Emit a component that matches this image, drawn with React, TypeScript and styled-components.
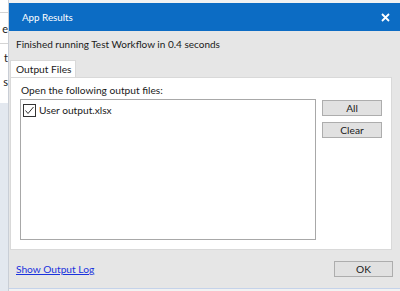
import React from 'react';
import styled, { createGlobalStyle } from 'styled-components';

const GlobalStyle = createGlobalStyle`
  body {
    margin: 0;
    background: #f2f2f2;
    font-family: 'Segoe UI', Lato, 'Liberation Sans', sans-serif;
    font-size: 10.2px;
    color: #1a1a1a;
  }
`;

const Screen = styled.div`
  display: flex;
  width: 400px;
  height: 291px;
  overflow: hidden;
`;

const BackWindow = styled.div`
  width: 9px;
  flex-shrink: 0;
  display: flex;
  flex-direction: column;
  background: #ffffff;
  border-right: 1px solid #c9ced6;
  box-sizing: border-box;
  overflow: hidden;
`;

const BackRow = styled.div<{ $h: number; $line?: boolean }>`
  height: ${({ $h }) => $h}px;
  flex-shrink: 0;
  display: flex;
  align-items: center;
  justify-content: flex-end;
  border-bottom: ${({ $line }) => ($line ? '1px solid #d4d4d4' : 'none')};
  font-size: 11px;
  color: #222;
  white-space: nowrap;
`;

const BackFill = styled.div`
  flex: 1;
  background: #e3e8ef;
`;

const Dialog = styled.div`
  flex: 1;
  margin-top: 3px;
  height: 285px;
  display: flex;
  flex-direction: column;
  background: #e6e6e6;
  border-bottom: 1px solid #c5d3ea;
`;

const TitleBar = styled.div`
  height: 28px;
  flex-shrink: 0;
  display: flex;
  align-items: center;
  justify-content: space-between;
  padding: 0 11px 0 13px;
  background: #0c6cc4;
  color: #ffffff;
  font-size: 9.8px;
`;

const CloseGlyph = styled.svg`
  width: 9px;
  height: 9px;
`;

const Status = styled.div`
  height: 26px;
  display: flex;
  align-items: center;
  padding-left: 7px;
  font-size: 10px;
`;

const TabStrip = styled.div`
  display: flex;
  padding-left: 1px;
  margin-top: 3px;
`;

const Tab = styled.div`
  height: 17px;
  padding: 0 4px 0 5px;
  display: flex;
  align-items: center;
  background: #ffffff;
  border: 1px solid #d9d9d9;
  border-bottom: none;
  box-sizing: border-box;
`;

const Panel = styled.div`
  margin: 0 9px 0 1px;
  height: 173px;
  box-sizing: border-box;
  background: #ffffff;
  border: 1px solid #d9d9d9;
  padding: 4px 9px 9px 9px;
  display: flex;
  flex-direction: column;
`;

const Label = styled.div`
  height: 16px;
  display: flex;
  align-items: center;
  padding-left: 1px;
  margin-bottom: 1px;
`;

const PanelBody = styled.div`
  flex: 1;
  display: flex;
  gap: 6px;
`;

const FileList = styled.div`
  width: 296px;
  box-sizing: border-box;
  border: 1px solid #a8a8a8;
  padding: 3px 2px;
`;

const FileItem = styled.label`
  display: flex;
  align-items: center;
  gap: 3px;
  height: 14px;
`;

const Check = styled.svg`
  width: 13px;
  height: 13px;
`;

const ButtonColumn = styled.div`
  display: flex;
  flex-direction: column;
  gap: 6px;
  padding-top: 1px;
`;

const Button = styled.button<{ $w: number }>`
  width: ${({ $w }) => $w}px;
  height: 16px;
  padding: 0;
  font: inherit;
  line-height: 14px;
  color: #1a1a1a;
  background: #e1e1e1;
  border: 1px solid #adadad;
`;

const Footer = styled.div`
  flex: 1;
  display: flex;
  align-items: center;
  justify-content: space-between;
  padding: 0 8px 0 7px;
`;

const LogLink = styled.a`
  color: #1a33dd;
  text-decoration: underline;
  cursor: pointer;
`;

const App: React.FC = () => {
  return (
    <>
      <GlobalStyle />
      <Screen>
        <BackWindow>
          <BackRow $h={12} $line />
          <BackRow $h={30} $line>e</BackRow>
          <BackRow $h={27}>t</BackRow>
          <BackRow $h={20}>s</BackRow>
          <BackRow $h={12} />
          <BackFill />
        </BackWindow>
        <Dialog>
          <TitleBar>
            <span>App Results</span>
            <CloseGlyph viewBox="0 0 9 9">
              <path d="M1 1 L8 8 M8 1 L1 8" stroke="#ffffff" strokeWidth="1.8" />
            </CloseGlyph>
          </TitleBar>
          <Status>Finished running Test Workflow in 0.4 seconds</Status>
          <TabStrip>
            <Tab>Output Files</Tab>
          </TabStrip>
          <Panel>
            <Label>Open the following output files:</Label>
            <PanelBody>
              <FileList>
                <FileItem>
                  <Check viewBox="0 0 13 13">
                    <rect x="0.5" y="0.5" width="12" height="12" fill="#ffffff" stroke="#333333" />
                    <path d="M2.5 6.5 L5 9.5 L10.5 3" fill="none" stroke="#333333" strokeWidth="1" />
                  </Check>
                  <span>User output.xlsx</span>
                </FileItem>
              </FileList>
              <ButtonColumn>
                <Button $w={60}>All</Button>
                <Button $w={60}>Clear</Button>
              </ButtonColumn>
            </PanelBody>
          </Panel>
          <Footer>
            <LogLink>Show Output Log</LogLink>
            <Button $w={59}>OK</Button>
          </Footer>
        </Dialog>
      </Screen>
    </>
  );
};

export default App;
